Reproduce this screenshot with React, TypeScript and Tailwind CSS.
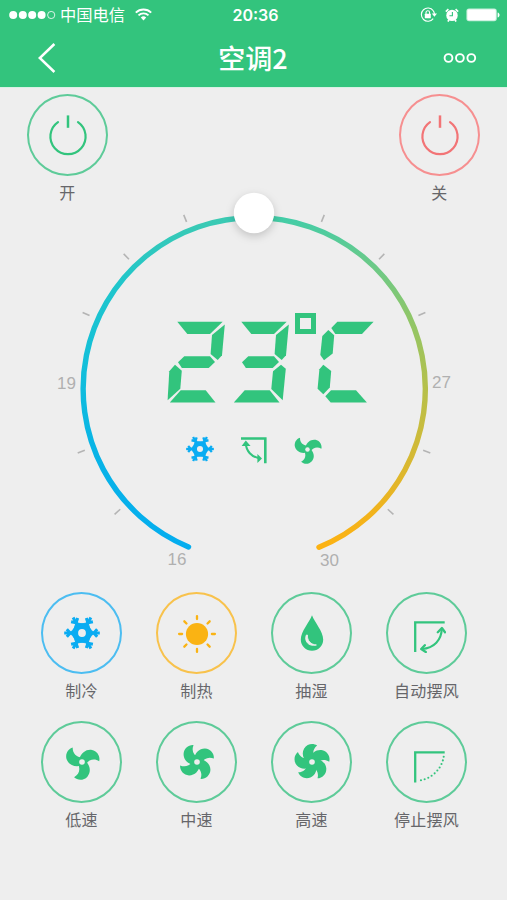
import React from 'react';
import clsx from 'clsx';

// ─── Types ────────────────────────────────────────────────────────────────────

interface Mode {
  label: string;
  ring: string;
  icon: React.ReactNode;
}

// ─── Icons ────────────────────────────────────────────────────────────────────

function PowerIcon() {
  return (
    <svg width="40" height="42" viewBox="-20 -21 40 42" fill="none" stroke="currentColor">
      <path d="M-10 -12.9 A17.6 17.6 0 1 0 10 -12.9" strokeWidth="2.2" strokeLinecap="round" />
      <path d="M0 -19.6 V-7.2" strokeWidth="2.5" />
    </svg>
  );
}

function SnowIcon({ size }: { size: number }) {
  return (
    <svg width={size} height={size} viewBox="-18 -18 36 36" fill="none" stroke="currentColor">
      <circle r="6.8" strokeWidth="5.8" />
      {[0, 60, 120, 180, 240, 300].map((a) => (
        <g key={a} transform={`rotate(${a})`}>
          <path d="M8 -4.4 L12 0 L8 4.4 Z" fill="currentColor" strokeWidth="0.8" />
          <path d="M8 0 H17.8" strokeWidth="3" />
          <path d="M15.2 -3.8 L11.8 0 L15.2 3.8" strokeWidth="3" />
        </g>
      ))}
    </svg>
  );
}

function SunIcon() {
  return (
    <svg width="40" height="40" viewBox="-20 -20 40 40" fill="currentColor" stroke="currentColor">
      <circle r="11.1" stroke="none" />
      {[0, 45, 90, 135, 180, 225, 270, 315].map((a) => (
        <path key={a} d="M14.9 0 H17.9" strokeWidth="2.3" strokeLinecap="round" transform={`rotate(${a})`} />
      ))}
    </svg>
  );
}

function DropIcon() {
  return (
    <svg width="24" height="36" viewBox="-12 0 24 36">
      <path d="M0 0.3 C2.5 7 11.2 16.5 11.2 24.6 A11.2 11.2 0 0 1 -11.2 24.6 C-11.2 16.5 -2.5 7 0 0.3 Z" fill="currentColor" />
      <path d="M-5.6 20 C-8 25.5 -4 32 4.4 30 C-1 29.6 -4.9 26 -4.6 20 Z" fill="#eee" stroke="#eee" strokeWidth="0.9" strokeLinejoin="round" />
    </svg>
  );
}

function FanIcon({ blades, size = 36, turn = 0 }: { blades: number; size?: number; turn?: number }) {
  return (
    <svg width={size} height={size} viewBox="-18 -18 36 36" fill="currentColor">
      {Array.from({ length: blades }, (_, i) => (
        <path
          key={i}
          d="M-2.6 -3 C-0.8 -9.5 4.6 -13 10 -12 C15.4 -10.8 18.4 -5.6 17.2 -0.8 C12.4 -3.8 7 -2.6 3.8 2.4 Z"
          transform={`rotate(${turn + (i * 360) / blades})`}
        />
      ))}
      <circle r="2.8" fill="#eee" />
    </svg>
  );
}

function SwingIcon() {
  return (
    <svg width="32" height="32" viewBox="0 0 32 32" fill="none" stroke="currentColor" strokeWidth="2.3">
      <path d="M1.2 31 V1.3 H30.7" />
      <path d="M27.8 7.5 C27.6 19 20 27 8 28" strokeWidth="2.1" />
      <path d="M23.8 11.2 L27.9 7 L31 11.2 M10.8 24.2 L7.2 28 L11.8 31" strokeLinecap="round" strokeLinejoin="round" />
    </svg>
  );
}

function SwingOffIcon() {
  return (
    <svg width="32" height="32" viewBox="0 0 32 32" fill="none" stroke="currentColor" strokeWidth="2.3">
      <path d="M1.2 31.6 V1.3 H30.7" />
      <path d="M29.7 5.7 A28.6 28.6 0 0 1 6 29.4" strokeWidth="2.1" strokeLinecap="round" strokeDasharray="0 3.85" />
    </svg>
  );
}

function SwingStatusIcon() {
  return (
    <svg width="26" height="27" viewBox="0 0 26 27" fill="none" stroke="currentColor">
      <path d="M0 1.5 H24.3 V26.3" strokeWidth="2.6" />
      <path d="M4.8 6 C5 14 10.5 20 19 21.4" strokeWidth="2.1" />
      <path d="M0.6 9 L4.8 3.6 L9.6 9 Z M16.4 17 L21 21.6 L16.4 25.9 Z" fill="currentColor" stroke="none" />
    </svg>
  );
}

// ─── Segment display ──────────────────────────────────────────────────────────

const digitSegments: Record<string, string> = {
  a: '[clip-path:polygon(10.3px_0.8px,55.7px_0.8px,43px_13px,20.3px_13px)]',
  b: '[clip-path:polygon(57.8px_3.5px,55px_34.3px,50.7px_39px,43.6px_33px,45px_13.9px)]',
  c: '[clip-path:polygon(50px_43.7px,54.8px_47.7px,51.7px_79.3px,40.3px_68px,42px_50.3px)]',
  d: '[clip-path:polygon(13.7px_69.2px,38.7px_69.2px,48.5px_81.4px,2.8px_81.4px)]',
  e: '[clip-path:polygon(8px_43.7px,14.8px_49.7px,13.3px_67.7px,0.6px_79.3px,2.3px_50.3px)]',
  g: '[clip-path:polygon(11px_41.2px,17.3px_35.2px,43px_35.2px,48px_41px,41.7px_47px,14.9px_47px)]',
};

const unitSegments = [
  '[clip-path:polygon(20.3px_0.8px,56.6px_0.8px,45px_13px,18.3px_13px,14.3px_7px)]',
  '[clip-path:polygon(11.3px_9px,17.2px_14.3px,15.7px_32.5px,7px_39.3px,3.3px_34px,5.3px_15px)]',
  '[clip-path:polygon(6.3px_43.7px,14.2px_49.9px,12.8px_66.5px,6.3px_73.3px,0.6px_67.7px,2.4px_48.3px)]',
  '[clip-path:polygon(14px_69.2px,39px_69.2px,49.9px_81.4px,13.7px_81.4px,8.3px_75.3px)]',
];

const litSegments: Record<string, string> = { '2': 'abged', '3': 'abgcd' };

function SegmentCell({ segments }: { segments: string[] }) {
  return (
    <div className="mt-2 grid h-[82px] w-16">
      {segments.map((shape) => (
        <span key={shape} className={clsx('bg-[#32c47d] [grid-area:1/1]', shape)} />
      ))}
    </div>
  );
}

function Temperature({ value }: { value: number }) {
  return (
    <div className="flex pl-[167px]" role="img" aria-label={`${value}℃`}>
      {String(value).split('').map((digit) => (
        <SegmentCell key={digit} segments={litSegments[digit].split('').map((s) => digitSegments[s])} />
      ))}
      <span className="mr-px size-[21px] border-[5px] border-[#32c47d]" />
      <SegmentCell segments={unitSegments} />
    </div>
  );
}

// ─── Header ───────────────────────────────────────────────────────────────────

function Header() {
  return (
    <header className="h-[88px] bg-[#33c47d] text-white">
      <div className="grid h-[29px] grid-cols-3 items-center pt-px pr-[7px] pl-[9px]">
        <div className="flex items-center">
          <svg width="47" height="10" viewBox="0 0 47 10" fill="currentColor">
            {[4.2, 13.8, 23.2, 32.6].map((x) => (
              <circle key={x} cx={x} cy="5" r="4" />
            ))}
            <circle cx="42.2" cy="5" r="3.6" fill="none" stroke="currentColor" strokeWidth="0.8" />
          </svg>
          <span className="ml-1 pb-0.5 text-[16.3px] leading-none whitespace-nowrap">中国电信</span>
          <svg className="ml-2.5 shrink-0" width="17" height="13" viewBox="0 0 17 13" fill="none" stroke="currentColor" strokeWidth="1.9">
            <path d="M0.8 4.6 A11 11 0 0 1 16.2 4.6" />
            <path d="M3.5 7.4 A7.1 7.1 0 0 1 13.5 7.4" />
            <path d="M5.8 9.6 A4 4 0 0 1 11.2 9.6 L8.5 12.4 Z" fill="currentColor" stroke="none" />
          </svg>
        </div>
        <div className="pl-0.5 text-center font-['Inter'] text-[16px] leading-none font-semibold">20:36</div>
        <div className="flex items-center justify-end">
          <svg width="17" height="16" viewBox="0 0 17 16" fill="none" stroke="currentColor">
            <path d="M13.2 3.6 A6.6 6.6 0 1 0 13.2 11.6" strokeWidth="1.1" />
            <path d="M13.2 3.6 A6.6 6.6 0 0 1 14.4 7" strokeWidth="1.1" />
            <path d="M11.8 6.6 H17 L14.4 9.8 Z" fill="currentColor" stroke="none" />
            <rect x="4.8" y="6.7" width="6" height="4.6" rx="0.5" fill="currentColor" stroke="none" />
            <path d="M6 7 V5.6 A1.8 1.8 0 0 1 9.6 5.6 V7" strokeWidth="1.1" />
          </svg>
          <svg className="ml-2" width="14" height="14" viewBox="0 0 14 14">
            <circle cx="7" cy="7.4" r="5.7" fill="currentColor" />
            <path d="M0.8 3.6 L3.4 1.2 M13.2 3.6 L10.6 1.2 M2.8 13.6 L4 12 M11.2 13.6 L10 12" stroke="currentColor" strokeWidth="1.6" />
            <path d="M7.4 4 V7.8 H4.4" fill="none" stroke="#33c47d" strokeWidth="1.1" />
          </svg>
          <svg className="ml-[7px]" width="34" height="14" viewBox="0 0 34 14" fill="currentColor">
            <rect x="0.4" y="0.6" width="30.4" height="12.6" rx="2.6" opacity="0.7" />
            <rect x="1.4" y="1.6" width="28.4" height="10.6" rx="1.4" />
            <path d="M31.6 4.4 C34.2 5 34.2 9 31.6 9.6 Z" />
          </svg>
        </div>
      </div>
      <div className="flex h-[58px] items-center justify-between pr-[30px] pb-px pl-[38px]">
        <svg width="18" height="32" viewBox="0 0 18 32" fill="none" stroke="currentColor" strokeWidth="2.5">
          <path d="M16.4 2 L1.8 16 L16.4 30" />
        </svg>
        <h1 className="pl-[7px] text-[27px] leading-none font-medium">空调2</h1>
        <svg width="34" height="12" viewBox="0 0 34 12" fill="none" stroke="currentColor" strokeWidth="1.9">
          <circle cx="5.5" cy="6" r="3.9" />
          <circle cx="16.9" cy="6" r="3.9" />
          <circle cx="28.3" cy="6" r="3.9" />
        </svg>
      </div>
      <div className="h-px bg-[#d8f1e4]" />
    </header>
  );
}

// ─── Round button ─────────────────────────────────────────────────────────────

function RoundButton({ label, ring, icon }: Mode) {
  return (
    <button className="flex flex-col items-center">
      <span className={clsx('flex h-[82px] w-[81px] items-center justify-center rounded-[50%] border-2', ring)}>{icon}</span>
      <span className="mt-[7px] text-[16px] leading-[18px] tracking-[0.3px] whitespace-nowrap text-[#66666a]">{label}</span>
    </button>
  );
}

// ─── Dial ─────────────────────────────────────────────────────────────────────

const ticks = [-132, -110, -66, -44, -22, 22, 44, 66, 110, 132];

const scale = [
  { value: 16, x: 167.5, y: 372 },
  { value: 19, x: 57, y: 196 },
  { value: 27, x: 432, y: 194.7 },
  { value: 30, x: 320, y: 373.2 },
];

function Dial() {
  return (
    <section className="grid h-[382px]">
      <svg className="overflow-visible [grid-area:1/1]" width="507" height="382" viewBox="0 0 507 382">
        <defs>
          <linearGradient id="cool" gradientUnits="userSpaceOnUse" x1="0" y1="354" x2="0" y2="24">
            <stop offset="0" stopColor="#04adef" />
            <stop offset="0.3" stopColor="#08b4e6" />
            <stop offset="0.55" stopColor="#12bfda" />
            <stop offset="0.8" stopColor="#20c6cb" />
            <stop offset="1" stopColor="#3ccab2" />
          </linearGradient>
          <linearGradient id="warm" gradientUnits="userSpaceOnUse" x1="0" y1="24" x2="0" y2="354">
            <stop offset="0" stopColor="#42cda8" />
            <stop offset="0.12" stopColor="#65ca8d" />
            <stop offset="0.3" stopColor="#8ec669" />
            <stop offset="0.52" stopColor="#b6c04a" />
            <stop offset="0.72" stopColor="#d4b935" />
            <stop offset="0.9" stopColor="#f2b31c" />
            <stop offset="1" stopColor="#fcb212" />
          </linearGradient>
        </defs>
        <g fill="none" strokeWidth="5.4" strokeLinecap="round">
          <path d="M188.5 353.9 A171.3 171.3 0 0 1 254 24.5" stroke="url(#cool)" />
          <path d="M254 24.5 A171.3 171.3 0 0 1 319 354.3" stroke="url(#warm)" />
        </g>
        <g transform="translate(254 195.8)" stroke="#b4b4b4" strokeWidth="1.6">
          {ticks.map((a) => (
            <path key={a} d="M0 -180 V-187.6" transform={`rotate(${a})`} />
          ))}
        </g>
        <g className="font-['Liberation_Sans'] text-[17px]" fill="#b0b0b0">
          {scale.map((mark) => (
            <text key={mark.value} x={mark.x} y={mark.y}>
              {mark.value}
            </text>
          ))}
        </g>
        <circle className="drop-shadow-[0_3px_4px_rgba(0,0,0,0.18)]" cx="254" cy="20" r="20.2" fill="#fff" />
      </svg>
      <div className="pt-[120px] [grid-area:1/1]">
        <Temperature value={23} />
        <div className="mt-8 flex items-start gap-[27.3px] pl-[185.7px] text-[#32c47d]">
          <span className="text-[#0aacf2]">
            <SnowIcon size={28} />
          </span>
          <span className="pt-0.5">
            <SwingStatusIcon />
          </span>
          <span className="-ml-px">
            <FanIcon blades={3} size={29} />
          </span>
        </div>
      </div>
    </section>
  );
}

// ─── Modes ────────────────────────────────────────────────────────────────────

const green = 'border-[#5ecb99] text-[#32c47d]';

const modes: Mode[] = [
  { label: '制冷', ring: 'border-[#4cbdf1] text-[#0aacf2]', icon: <SnowIcon size={36} /> },
  { label: '制热', ring: 'border-[#f8c24c] text-[#fab313]', icon: <span className="pt-px"><SunIcon /></span> },
  { label: '抽湿', ring: green, icon: <DropIcon /> },
  { label: '自动摆风', ring: green, icon: <span className="pt-2 pl-1.5"><SwingIcon /></span> },
  { label: '低速', ring: green, icon: <FanIcon blades={3} /> },
  { label: '中速', ring: green, icon: <FanIcon blades={4} turn={-9} /> },
  { label: '高速', ring: green, icon: <FanIcon blades={5} turn={2} /> },
  { label: '停止摆风', ring: green, icon: <span className="pt-2.5 pl-1.5"><SwingOffIcon /></span> },
];

export default function App() {
  return (
    <div className="h-[900px] w-[507px] overflow-hidden bg-[#eee] font-['Noto_Sans_CJK_SC',sans-serif]">
      <Header />
      <div className="flex h-[105px] items-start justify-between px-[27px] pt-[5.5px]">
        <RoundButton label="开" ring={green} icon={<PowerIcon />} />
        <RoundButton label="关" ring="border-[#f68f90] text-[#f27476]" icon={<PowerIcon />} />
      </div>
      <Dial />
      <div className="mr-[23px] ml-6 grid grid-cols-4 gap-y-[22px] pt-[17px]">
        {modes.map((mode) => (
          <RoundButton key={mode.label} {...mode} />
        ))}
      </div>
    </div>
  );
}
